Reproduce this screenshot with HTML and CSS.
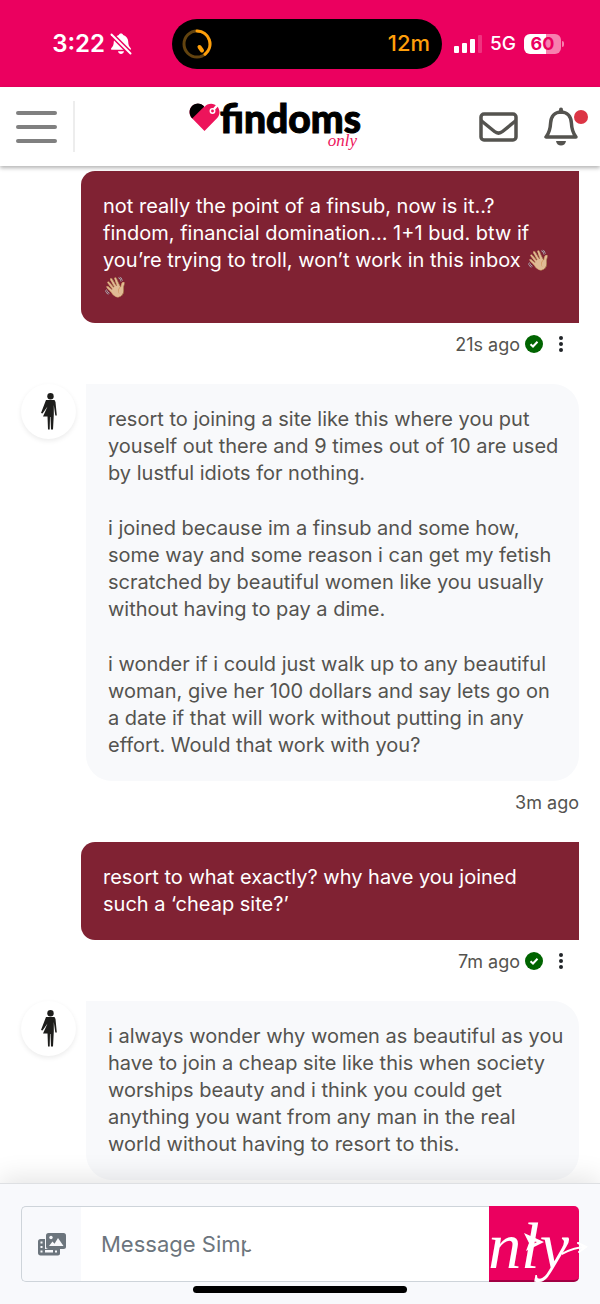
FILE: index.html
```
<!DOCTYPE html>
<html lang="en">
<head>
    <meta charset="utf-8">
    <meta name="viewport" content="width=device-width, initial-scale=1">
    <title>findoms only - Messages</title>
    <link rel="stylesheet" href="styles.css">
</head>
<body>
<div class="status">
    <div class="status-left">
        <span class="clock">3:22</span>
        <svg width="22" height="22" viewBox="0 0 22 22" fill="#fff">
            <path d="M11 .5c1.200 0 2 .6 2.200 1.600 3 .9 4.800 3.300 5 6.400.1 3.700.8 5 2.400 6.400.6.600.4 1.900-.6 1.900H2c-1 0-1.200-1.300-.6-1.900C3 13.500 3.700 12.200 3.800 8.500 4 5.400 5.800 3 8.800 2.100 9 1.100 9.800.5 11 .5z"/>
            <path d="M8 18.200h6c-.4 1.800-1.600 2.800-3 2.800s-2.600-1-3-2.800z"/>
            <path d="M1 1L21 21" stroke="#eb005f" stroke-width="5"/>
            <path d="M1.500 1.500L20.500 20.500" stroke="#fff" stroke-width="2" stroke-linecap="round"/>
        </svg>
    </div>
    <div class="island">
        <svg width="30" height="30" viewBox="0 0 30 30" fill="none" stroke-width="3" stroke-linecap="round">
            <circle cx="15" cy="15" r="13" stroke="#62430f"/>
            <path d="M15 2A13 13 0 0 1 23 25.200" stroke="#ff9f0a"/>
            <path d="M17.500 18L20 21.500" stroke="#ff9f0a" stroke-width="4"/>
        </svg>
        <span>12m</span>
    </div>
    <div class="status-right">
        <svg width="28" height="18" viewBox="0 0 28 18" fill="#fff">
            <rect x="0" y="11" width="5" height="7" rx="1"/>
            <rect x="8" y="8" width="5" height="10" rx="1"/>
            <rect x="16" y="4" width="5" height="14" rx="1"/>
            <rect x="24" y="0" width="4" height="18" rx="1" opacity=".2"/>
        </svg>
        <span class="network">5G</span>
        <span class="battery">60</span>
    </div>
</div>

<header class="topbar">
    <button class="menu" aria-label="Menu"><i></i><i></i><i></i></button>
    <a class="logo" href="#">
        <svg width="31" height="29" viewBox="0 0 31 29">
            <path d="M15.500 28L2.800 15C-.3 11.800-.1 6.600 2.600 3.500 6.400-.5 12.500 0 15.500 4c3-4 9.100-4.500 12.900-.5 2.700 3.100 2.900 8.300-.2 11.500z" fill="#ed145b"/>
            <path d="M3.200 15.500C-.3 11.800-.1 6.600 2.600 3.500 6.400-.5 11.800-.2 15.300 3.600z" fill="#000"/>
            <circle cx="23.500" cy="8" r="2.200" fill="#ed145b" stroke="#fff" stroke-width="1.500"/>
            <path d="M25.500 5.500L29 1.500" stroke="#fff" stroke-width="2.500" stroke-linecap="round"/>
        </svg>
        <span class="name"><span class="findoms">findoms</span><span class="only">only</span></span>
    </a>
    <a class="icon" href="#" aria-label="Messages">
        <svg width="39" height="30" viewBox="0 0 39 30" fill="none" stroke="#54534f" stroke-width="3.500" stroke-linejoin="round">
            <rect x="2" y="2" width="35" height="26" rx="3"/>
            <path d="M2 8.500l13.500 11c2.500 2 5.500 2 8 0L37 8.500"/>
        </svg>
    </a>
    <a class="icon bell" href="#" aria-label="Notifications">
        <svg width="34" height="40" viewBox="0 0 34 40" fill="none" stroke="#54534f" stroke-width="3.500" stroke-linejoin="round">
            <path d="M17 2.500V5" stroke-width="4" stroke-linecap="round"/>
            <path d="M17 5C11 5 7 9.500 6.600 16c-.3 6.500-1 9.500-4.600 14h30c-3.600-4.500-4.300-7.500-4.600-14C27 9.500 23 5 17 5z"/>
            <path d="M12 34h10c-.5 3-2.500 4.500-5 4.500S12.500 37 12 34z" fill="#54534f" stroke="none"/>
        </svg>
        <span class="dot"></span>
    </a>
</header>

<main class="chat">
    <div class="message sent">
        <div class="bubble">
            <p>not really the point of a finsub, now is it..? findom, financial domination... 1+1 bud. btw if you’re trying to troll, won’t work in this inbox 👋🏼👋🏼</p>
        </div>
        <div class="meta">
            <span>21s ago</span>
            <svg width="18" height="18" viewBox="0 0 18 18">
                <circle cx="9" cy="9" r="9" fill="#006400"/>
                <path d="M5.500 9.200L8 11.500l4.500-4.700" fill="none" stroke="#fff" stroke-width="2"/>
            </svg>
            <button class="more" aria-label="More">
                <svg width="4" height="16" viewBox="0 0 4 16" fill="#212529"><circle cx="2" cy="2" r="2"/><circle cx="2" cy="8" r="2"/><circle cx="2" cy="14" r="2"/></svg>
            </button>
        </div>
    </div>

    <div class="message received">
        <span class="avatar">
            <svg width="16" height="37" viewBox="0 0 16 37" fill="#1d1d1b">
                <circle cx="9.500" cy="3.200" r="3.200"/>
                <path d="M5 7h8.500l1 2 1.300 13.500h-1.500L12.800 12v9.500l-.8 15H10L9.500 24H9l-.3 12.500H7L6.500 23.500H2L6.500 13.500 1.500 20.500 0 20z"/>
            </svg>
        </span>
        <div class="bubble">
            <p>resort to joining a site like this where you put youself out there and 9 times out of 10 are used by lustful idiots for nothing.</p>
            <p>i joined because im a finsub and some how, some way and some reason i can get my fetish scratched by beautiful women like you usually without having to pay a dime.</p>
            <p>i wonder if i could just walk up to any beautiful woman, give her 100 dollars and say lets go on a date if that will work without putting in any effort. Would that work with you?</p>
        </div>
        <div class="meta"><span>3m ago</span></div>
    </div>

    <div class="message sent">
        <div class="bubble">
            <p>resort to what exactly? why have you joined such a ‘cheap site?’</p>
        </div>
        <div class="meta">
            <span>7m ago</span>
            <svg width="18" height="18" viewBox="0 0 18 18">
                <circle cx="9" cy="9" r="9" fill="#006400"/>
                <path d="M5.500 9.200L8 11.500l4.500-4.700" fill="none" stroke="#fff" stroke-width="2"/>
            </svg>
            <button class="more" aria-label="More">
                <svg width="4" height="16" viewBox="0 0 4 16" fill="#212529"><circle cx="2" cy="2" r="2"/><circle cx="2" cy="8" r="2"/><circle cx="2" cy="14" r="2"/></svg>
            </button>
        </div>
    </div>

    <div class="message received">
        <span class="avatar">
            <svg width="16" height="37" viewBox="0 0 16 37" fill="#1d1d1b">
                <circle cx="9.500" cy="3.200" r="3.200"/>
                <path d="M5 7h8.500l1 2 1.300 13.500h-1.500L12.800 12v9.500l-.8 15H10L9.500 24H9l-.3 12.500H7L6.500 23.500H2L6.500 13.500 1.500 20.500 0 20z"/>
            </svg>
        </span>
        <div class="bubble">
            <p>i always wonder why women as beautiful as you have to join a cheap site like this when society worships beauty and i think you could get anything you want from any man in the real world without having to resort to this.</p>
        </div>
    </div>
</main>

<footer class="composer">
    <form class="group">
        <button type="button" class="attach" aria-label="Add media">
            <svg width="28" height="23" viewBox="0 0 28 23">
                <path d="M2.500 6H7v10h15v4.500c0 1.200-.8 2-2 2H2.500c-1.500 0-2.500-1-2.500-2.500V8.500C0 7 1 6 2.500 6z" fill="#6c757d"/>
                <path d="M2.500 8.500h2v2h-2zM2.500 13h2v2h-2zM2.500 17.500h2v2h-2zM17 17.500h2v2h-2z" fill="#f8f9fc"/>
                <path d="M7 17v2.500h8V17z" fill="#f8f9fc"/>
                <rect x="8" y="0" width="20" height="16" rx="2.500" fill="#6c757d"/>
                <path d="M11 13l3.500-4.500 2 2.200L20 5l5.500 8z" fill="#f8f9fc"/>
                <circle cx="13" cy="4.500" r="1.700" fill="#f8f9fc"/>
            </svg>
        </button>
        <input type="text" placeholder="Message Simp" aria-label="Message">
        <button type="button" class="send" aria-label="Send">
            <svg width="20" height="20" viewBox="0 0 20 20" fill="#fff"><path d="M0 0l20 9L2 18l3-8z"/><path d="M7 8v4l6-3z" fill="#eb005f"/></svg>
        </button>
        <div class="watermark">
            <svg width="58" height="60" viewBox="0 0 58 60"><path d="M29 58L5 33C-1 26-1 14 5 7c7-8 18-7 24 0 6-7 17-8 24 0 6 7 6 19 0 26z" fill="#fff"/></svg>
            <span>nly</span>
            <svg class="tail" width="26" height="14" viewBox="0 0 26 14" fill="none" stroke="#fff" stroke-width="2" stroke-linecap="round"><path d="M0 12C7 8 14 5 24 5M16 1l8 4-7 5"/></svg>
        </div>
    </form>
    <span class="home"></span>
</footer>
</body>
</html>
```

FILE: styles.css
```
*{
    box-sizing: border-box;
}
body{
    margin: 0;
    min-height: 100vh;
    display: flex;
    flex-direction: column;
    background-color: #fff;
    color: #54534f;
    font-family: Inter, "Liberation Sans", sans-serif;
    font-size: 20px;
    line-height: 27px;
}
svg{
    display: block;
    flex: none;
}
button{
    padding: 0;
    border: 0;
    background: none;
}
a{
    color: inherit;
    text-decoration: none;
}

/* phone status bar */
.status{
    display: grid;
    grid-template-columns: 1fr 270px 1fr;
    align-items: center;
    height: 87px;
    padding-left: 14px;
    background-color: #eb005f;
    color: #fff;
}
.status-left{
    display: flex;
    align-items: center;
    justify-content: flex-end;
    gap: 5px;
    padding-right: 40px;
}
.clock{
    font-size: 24px;
    font-weight: 600;
}
.island{
    display: flex;
    align-items: center;
    justify-content: space-between;
    height: 50px;
    padding: 0 12px 0 10px;
    border-radius: 25px;
    background-color: #000;
    color: #ff9f0a;
    font-size: 22px;
    font-weight: 500;
}
.status-right{
    display: flex;
    align-items: center;
    gap: 8px;
    padding-left: 12px;
}
.network{
    font-size: 19px;
    font-weight: 500;
}
.battery{
    position: relative;
    width: 37px;
    height: 20px;
    border-radius: 6px;
    background: linear-gradient(to right, #fff 60%, #f780af 60%);
    color: #eb005f;
    font-size: 18px;
    font-weight: 700;
    line-height: 20px;
    text-align: center;
}
.battery::after{
    content: "";
    position: absolute;
    right: -3px;
    top: 7px;
    width: 2px;
    height: 6px;
    border-radius: 0 2px 2px 0;
    background-color: #f780af;
}

/* site header */
.topbar{
    position: relative;
    z-index: 1;
    display: flex;
    align-items: center;
    height: 79px;
    padding: 0 22px 0 16px;
    background-color: #fff;
    box-shadow: 0 2px 4px rgba(0,0,0,.3);
}
.menu{
    display: flex;
    flex-direction: column;
    gap: 10px;
    width: 41px;
}
.menu i{
    height: 4px;
    border-radius: 2px;
    background-color: #808080;
}
.logo{
    flex: 1;
    display: flex;
    justify-content: center;
    height: 51px;
    margin-left: 16px;
    padding: 2px 4px 0 0;
    border-left: 2px solid #ededed;
}
.name{
    display: flex;
    flex-direction: column;
    align-items: flex-end;
}
.findoms{
    color: #000;
    font-family: Lato, sans-serif;
    font-size: 39px;
    font-weight: 900;
    line-height: 30px;
    -webkit-text-stroke: 1px #000;
}
.only{
    padding-right: 4px;
    color: #ed145b;
    font-family: "Liberation Serif", serif;
    font-size: 17px;
    font-style: italic;
    line-height: 16px;
}
.bell{
    position: relative;
    margin-left: 26px;
}
.dot{
    position: absolute;
    top: 3px;
    right: -10px;
    width: 14px;
    height: 14px;
    border-radius: 50%;
    background-color: #dc3545;
}

/* messages */
.chat{
    flex: 1;
    padding: 5px 21px 3px;
}
.bubble{
    padding: 22px;
}
.bubble p{
    margin: 0;
}
.bubble p + p{
    margin-top: 28px;
}
.sent .bubble{
    margin-left: 60px;
    border-radius: 14px 0 0 14px;
    background-color: #802233;
    color: #fff;
}
.received{
    display: grid;
    grid-template-columns: 55px 1fr;
    column-gap: 10px;
}
.received .bubble{
    padding-right: 15px;
    border-radius: 0 26px 26px 26px;
    background-color: #f8f9fb;
}
.received .meta{
    grid-column: 2;
}
.avatar{
    display: flex;
    align-items: center;
    justify-content: center;
    height: 55px;
    border-radius: 50%;
    background-color: #fff;
    box-shadow: 0 2px 5px rgba(0,0,0,.08);
}
.meta{
    display: flex;
    align-items: center;
    justify-content: flex-end;
    height: 61px;
    padding-bottom: 19px;
    font-size: 18px;
}
.meta > svg{
    margin-left: 5px;
}
.more{
    display: flex;
    justify-content: center;
    width: 36px;
}

/* message form */
.composer{
    position: relative;
    height: 121px;
    padding: 22px 21px;
    border-top: 1px solid #dee0e3;
    background-color: #f8f9fc;
    box-shadow: 0 -6px 24px rgba(0,0,0,.1);
}
.group{
    position: relative;
    display: flex;
    height: 76px;
}
.attach{
    display: flex;
    align-items: center;
    justify-content: center;
    width: 60px;
    border: 1px solid #ced4da;
    border-right: 0;
    border-radius: 5px 0 0 5px;
}
.group input{
    flex: 1;
    min-width: 0;
    padding: 0 20px;
    border: solid #ced4da;
    border-width: 1px 0;
    background-color: #fff;
    font-family: inherit;
    font-size: 22px;
}
.group input::placeholder{
    color: #6c757d;
    opacity: 1;
}
.send{
    display: flex;
    align-items: center;
    justify-content: center;
    width: 90px;
    border-radius: 0 5px 5px 0;
    background-color: #eb005f;
    border-bottom: 2px solid #a20043;
}
/* white logo lying across the form */
.watermark{
    position: absolute;
    inset: 10px 10px 0 224px;
    display: flex;
    justify-content: space-between;
    color: #fff;
    font-family: "Liberation Serif", serif;
    font-size: 66px;
    font-style: italic;
    line-height: 60px;
    pointer-events: none;
}
.tail{
    position: absolute;
    right: -19px;
    top: 26px;
}
.home{
    position: absolute;
    left: 50%;
    bottom: 11px;
    width: 214px;
    height: 7px;
    margin-left: -107px;
    border-radius: 4px;
    background-color: #000;
}
```
